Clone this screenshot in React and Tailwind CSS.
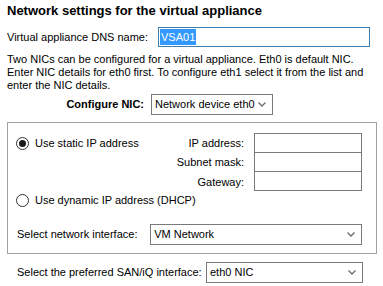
import { useState } from 'react'

const font = { fontFamily: '"Liberation Sans", Arial, sans-serif' }

function Chevron() {
  return (
    <svg width="8" height="5" viewBox="0 0 8 5" className="shrink-0">
      <polyline points="0.5,0.5 4,4 7.5,0.5" fill="none" stroke="#6b6b6b" strokeWidth="1.3" />
    </svg>
  )
}

function Dropdown({ value, className = '' }) {
  return (
    <div className={`flex items-center justify-between border border-[#7a7a7a] bg-white pl-[3px] pr-[6px] ${className}`}>
      <span className="truncate">{value}</span>
      <Chevron />
    </div>
  )
}

function Radio({ checked, label }) {
  return (
    <label className="flex items-center gap-[6px] h-[14px]">
      <span className="w-[13px] h-[13px] rounded-full border border-[#333] bg-white flex items-center justify-center">
        {checked && <span className="w-[7px] h-[7px] rounded-full bg-[#1a1a1a]" />}
      </span>
      <span>{label}</span>
    </label>
  )
}

export default function App() {
  const [dns] = useState('VSA01')
  return (
    <div className="w-[383px] h-[286px] bg-white text-black text-[11px] leading-[13px] px-[7px] pt-[3px] overflow-hidden" style={font}>
      <h1 className="font-bold text-[13px] leading-[15px]">Network settings for the virtual appliance</h1>

      <div className="flex items-center mt-[9px]">
        <span className="w-[151px]">Virtual appliance DNS name:</span>
        <div className="w-[212px] h-[20px] border border-[#3c7fb1] flex items-center pl-[1px]">
          <span className="bg-[#3399ff] text-white px-[1px] leading-[16px]">{dns}</span>
        </div>
      </div>

      <p className="mt-[6px] w-[370px]">
        Two NICs can be configured for a virtual appliance. Eth0 is default NIC. Enter NIC details for eth0 first. To configure eth1 select it from the list and enter the NIC details.
      </p>

      <div className="flex items-center mt-[2px]">
        <span className="w-[137px] text-right font-bold">Configure NIC:</span>
        <Dropdown value="Network device eth0" className="ml-[7px] w-[122px] h-[21px]" />
      </div>

      {/* group box */}
      <div className="mt-[7px] w-[370px] h-[132px] border border-[#a0a0a0] pl-[8px] pr-[14px] pt-[10px]">
        <div className="flex">
          <div className="flex-1 flex items-start pt-[3px]">
            <Radio checked label="Use static IP address" />
          </div>
          <div className="flex">
            <div className="flex flex-col items-end pr-[10px]">
              <span className="h-[20px] flex items-center">IP address:</span>
              <span className="h-[19px] flex items-center">Subnet mask:</span>
              <span className="h-[20px] flex items-center">Gateway:</span>
            </div>
            <div className="w-[108px] flex flex-col">
              <div className="h-[20px] border border-[#7a7a7a]" />
              <div className="h-[20px] border border-[#7a7a7a] -mt-px" />
              <div className="h-[20px] border border-[#7a7a7a] -mt-px" />
            </div>
          </div>
        </div>

        <div className="mt-[1px]">
          <Radio label="Use dynamic IP address (DHCP)" />
        </div>

        <div className="flex items-center mt-[17px] pl-[1px]">
          <span className="w-[134px]">Select network interface:</span>
          <Dropdown value="VM Network" className="w-[213px] h-[21px]" />
        </div>
      </div>

      <div className="flex items-center mt-[8px] pl-[10px]">
        <span className="w-[189px]">Select the preferred SAN/iQ interface:</span>
        <Dropdown value="eth0 NIC" className="w-[157px] h-[21px]" />
      </div>
    </div>
  )
}
